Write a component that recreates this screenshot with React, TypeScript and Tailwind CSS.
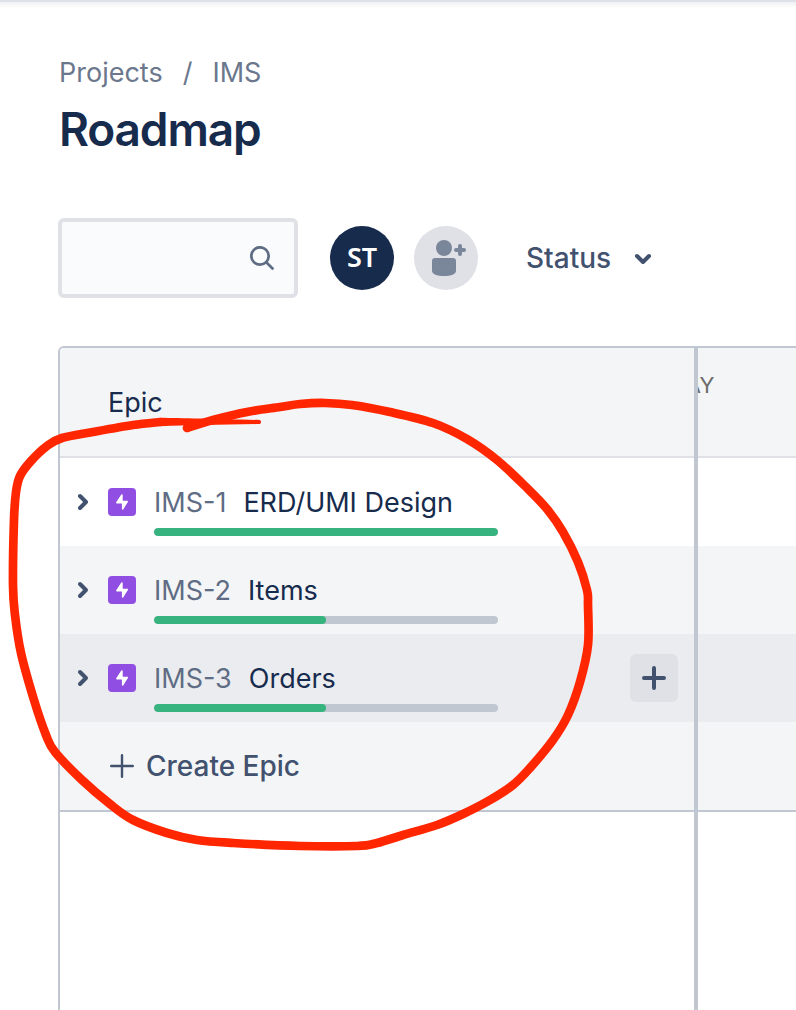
import React from "react";

type Point = [number, number];

type Epic = { id: string; name: string; progress: number; rowClass: string; selected?: boolean };

const epics: Epic[] = [
  { id: "IMS-1", name: "ERD/UMI Design", progress: 100, rowClass: "bg-white" },
  { id: "IMS-2", name: "Items", progress: 50, rowClass: "bg-[#f4f5f7]" },
  { id: "IMS-3", name: "Orders", progress: 50, rowClass: "bg-[#ebecf0]", selected: true },
];

const loopPoints: Point[] = [
  [187, 428], [213, 420], [247, 412], [280, 407], [300, 404], [325, 403], [352, 405], [390, 412],
  [433, 423], [467, 439], [497, 460], [527, 488], [547, 509], [563, 532], [578, 562], [587, 590],
  [588, 605], [588, 645], [580, 682], [568, 715], [553, 740], [530, 768], [513, 785], [490, 800],
  [463, 814], [437, 825], [403, 835], [377, 843], [357, 846], [300, 846], [233, 843], [197, 840],
  [167, 833], [133, 820], [110, 804], [82, 780], [55, 752], [46, 735], [34, 700], [21, 653],
  [15, 615], [13, 585], [14, 520], [16, 492], [20, 476], [31, 461], [47, 446], [62, 438],
  [93, 432], [133, 425], [160, 422],
];

// Catmull-Rom spline through the points, written as cubic segments.
function smoothPath(points: Point[]) {
  let d = `M${points[0][0]} ${points[0][1]}`;
  for (let i = 0; i < points.length - 1; i++) {
    const p0 = points[Math.max(i - 1, 0)];
    const p1 = points[i];
    const p2 = points[i + 1];
    const p3 = points[Math.min(i + 2, points.length - 1)];
    d += `C${p1[0] + (p2[0] - p0[0]) / 6} ${p1[1] + (p2[1] - p0[1]) / 6} ${p2[0] - (p3[0] - p1[0]) / 6} ${p2[1] - (p3[1] - p1[1]) / 6} ${p2[0]} ${p2[1]}`;
  }
  return d;
}

function Annotation() {
  return (
    <svg className="pointer-events-none absolute left-0 top-0" width="796" height="1010" viewBox="0 0 796 1010" fill="none" aria-hidden="true">
      <path d={smoothPath(loopPoints)} stroke="#ff2600" strokeWidth="8.700" strokeLinecap="round" strokeLinejoin="round" />
      <path d="M160 417.700C180 418 220 419 260 420Q262 422 260 424C220 425 190 425 160 426.300Z" fill="#ff2600" />
    </svg>
  );
}

function ChevronIcon({ className }: { className: string }) {
  return (
    <svg className={className} width="20" height="20" viewBox="0 0 20 20" fill="none" stroke="currentColor" strokeWidth="4" strokeLinecap="round" strokeLinejoin="round" aria-hidden="true">
      <path d="M8 4l6 6-6 6" />
    </svg>
  );
}

function EpicIcon() {
  return (
    <svg className="shrink-0" width="28" height="28" viewBox="0 0 28 28" aria-hidden="true">
      <rect width="28" height="28" rx="4" fill="#904ee2" />
      <path d="M13.300 6.600c.400-.700 1.400-.400 1.400.400v5.700h4.400c.900 0 1.100.600.800 1.200l-4.700 7.600c-.400.600-1.300.400-1.300-.400v-5.700H9c-.900 0-1.200-.600-.800-1.200z" fill="#fff" />
    </svg>
  );
}

function EpicRow({ epic }: { epic: Epic }) {
  return (
    <li className={`flex h-[88px] items-center pl-3 pr-4 ${epic.rowClass}`}>
      <button type="button" aria-label={`Expand ${epic.id}`} className="mr-4 text-[#42526e]">
        <ChevronIcon className="block" />
      </button>
      <EpicIcon />
      <div className="ml-[18px] w-[344px] pt-[15px]">
        <div className="flex items-center gap-[17px] whitespace-nowrap text-[27px] leading-[40px]">
          <a href="#" className="text-[#5e6c84]">{epic.id}</a>
          <span className="text-[#172b4d]">{epic.name}</span>
        </div>
        <div role="progressbar" aria-label={`${epic.name} progress`} aria-valuenow={epic.progress} className="mt-[5px] h-2 overflow-hidden rounded-full bg-[#c1c7d0]">
          <div className="h-full rounded-full bg-[#36b37e]" style={{ width: `${epic.progress}%` }} />
        </div>
      </div>
      {epic.selected && (
        <button type="button" aria-label="Add child issue" className="ml-auto flex size-12 items-center justify-center rounded-md bg-[#dfe1e6] text-[#42526e]">
          <svg width="24" height="24" viewBox="0 0 24 24" stroke="currentColor" strokeWidth="4" strokeLinecap="round" aria-hidden="true">
            <path d="M12 2v20M2 12h20" />
          </svg>
        </button>
      )}
    </li>
  );
}

export default function App() {
  return (
    <div className="relative flex min-h-screen flex-col overflow-hidden bg-white font-['Inter','Liberation_Sans',sans-serif]">
      <div className="h-[2px] bg-[#dfe1e8]" />
      <div className="h-[6px] bg-linear-to-b from-[#f0f1f4] to-white" />

      <header className="pl-[59px]">
        <nav aria-label="Breadcrumb" className="mt-[45px] flex gap-5 text-[27px] leading-[40px] text-[#6b778c]">
          <a href="#">Projects</a>
          <span>/</span>
          <a href="#">IMS</a>
        </nav>
        <h1 className="mt-[6px] text-[46px] font-semibold leading-[60px] tracking-tight text-[#172b4d]">Roadmap</h1>
      </header>

      <div className="mt-[59px] flex items-center pl-[58px]">
        <label className="flex h-20 w-60 items-center rounded-md border-4 border-[#dfe1e6] bg-[#fafbfc] pr-5">
          <input type="text" aria-label="Search roadmap" className="h-full min-w-0 flex-1 bg-transparent px-3 text-[27px] outline-none" />
          <svg className="shrink-0 text-[#5e6c84]" width="24" height="24" viewBox="0 0 24 24" fill="none" stroke="currentColor" strokeWidth="2.700" strokeLinecap="round" aria-hidden="true">
            <circle cx="10" cy="10" r="8.700" />
            <path d="M16.500 16.500l6 6" />
          </svg>
        </label>
        <button type="button" className="ml-8 size-16 rounded-full bg-[#172b4d] pb-[2px] font-['Noto_Sans',sans-serif] text-[27px] font-semibold text-white">ST</button>
        <button type="button" aria-label="Add people" className="ml-5 size-16 rounded-full bg-[#dfe1e6]">
          <svg width="64" height="64" viewBox="0 0 64 64" fill="#7a869a" aria-hidden="true">
            <circle cx="30" cy="22" r="8" />
            <path d="M18 35q0-3 3-3h18q3 0 3 3v10c0 3-5 5-12 5s-12-2-12-5z" />
            <path d="M46 20v8M42 24h8" stroke="#7a869a" strokeWidth="4" strokeLinecap="round" />
          </svg>
        </button>
        <button type="button" className="ml-12 flex items-center gap-[22px] text-[28px] font-medium leading-[40px] text-[#42526e]">
          Status
          <ChevronIcon className="block rotate-90" />
        </button>
      </div>

      <main className="ml-[58px] mt-12 flex flex-1 rounded-tl-md border-l-2 border-t-2 border-[#c1c7d0]">
        <section aria-label="Epics" className="w-[638px] shrink-0 border-r-4 border-[#c1c7d0]">
          <div className="flex h-[110px] items-center rounded-tl border-b-2 border-[#dfe1e6] bg-[#f4f5f7] pl-12 pt-[2px] text-[27px] leading-[40px] text-[#172b4d]">Epic</div>
          <ul>
            {epics.map((epic) => (
              <EpicRow key={epic.id} epic={epic} />
            ))}
          </ul>
          <div className="h-[90px] border-b-2 border-[#c1c7d0] bg-[#f4f5f7]">
            <button type="button" className="flex h-[88px] items-center gap-3 pl-[50px] text-[28px] font-medium leading-[40px] text-[#42526e]">
              <svg width="24" height="24" viewBox="0 0 24 24" stroke="currentColor" strokeWidth="2.400" strokeLinecap="round" aria-hidden="true">
                <path d="M12 1.200v21.600M1.200 12h21.600" />
              </svg>
              Create Epic
            </button>
          </div>
        </section>
        <section aria-label="Timeline" className="min-w-0 flex-1 overflow-hidden">
          <div className="flex h-[110px] items-start border-b-2 border-[#dfe1e6] bg-[#f4f5f7] pt-[22px]">
            <span className="-ml-8 text-[22px] leading-[30px] text-[#6b6b6b]">MAY</span>
          </div>
          {epics.map((epic) => (
            <div key={epic.id} className={`h-[88px] ${epic.rowClass}`} />
          ))}
          <div className="h-[90px] border-b-2 border-[#c1c7d0] bg-[#f4f5f7]" />
        </section>
      </main>
      <Annotation />
    </div>
  );
}
